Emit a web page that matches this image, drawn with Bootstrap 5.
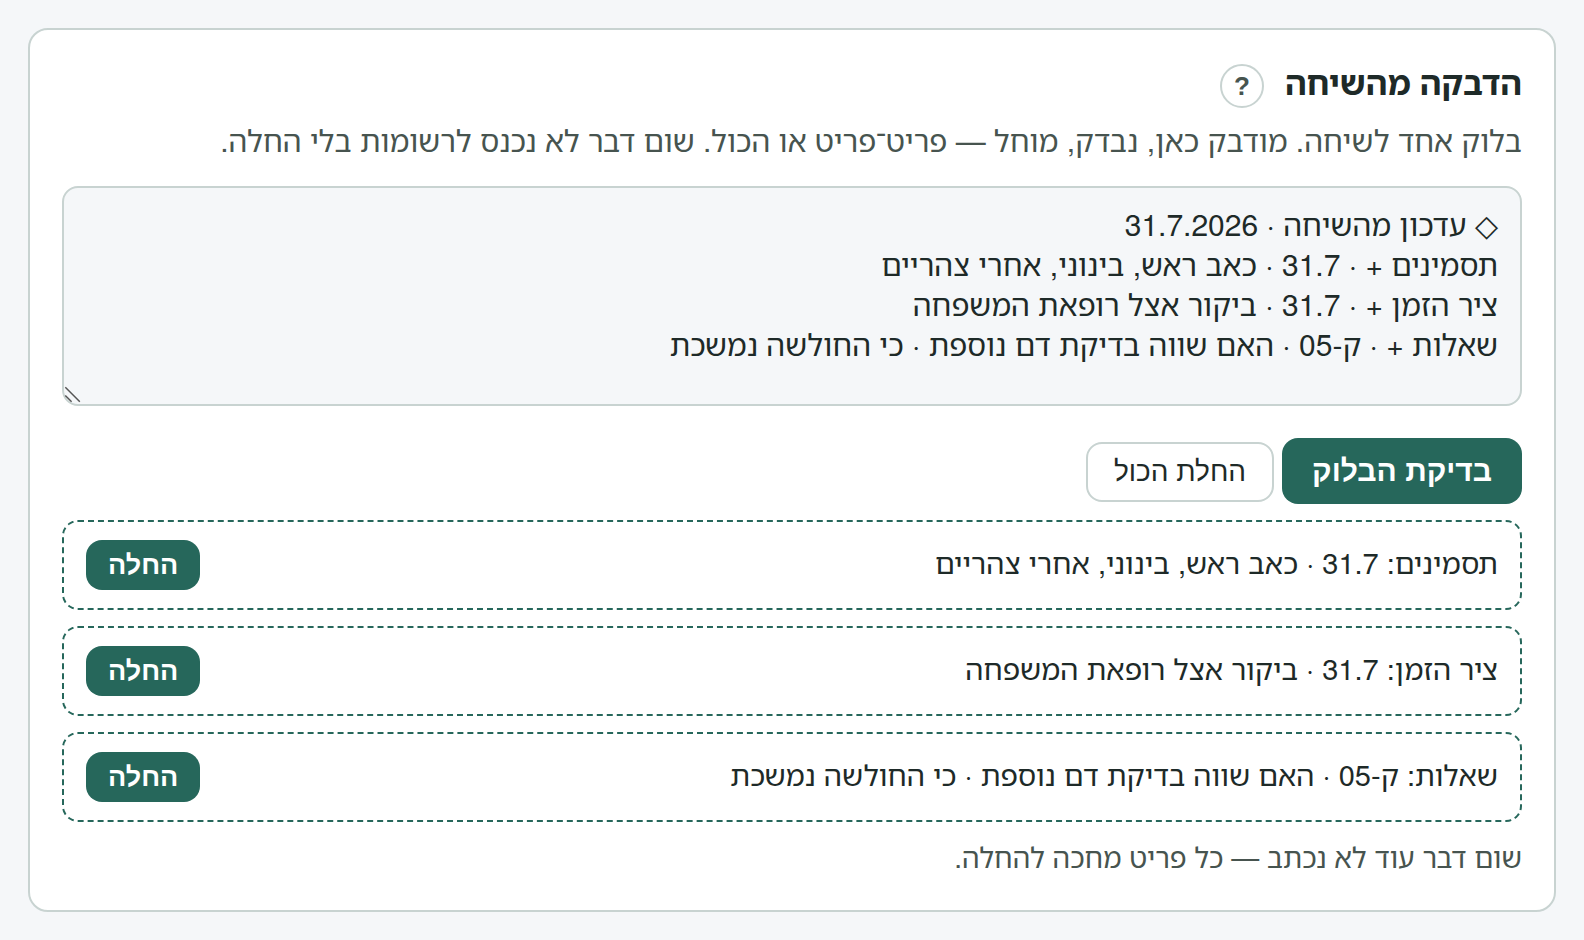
<!DOCTYPE html>
<html lang="he" dir="rtl">
<head>
<meta charset="utf-8">
<meta name="viewport" content="width=device-width, initial-scale=1">
<title>הדבקה מהשיחה</title>
<link href="https://cdn.jsdelivr.net/npm/bootstrap@5.3.0/dist/css/bootstrap.min.css" rel="stylesheet">
<style>
  :root { --ink: #1e2a28; --soft: #47544f; --line: #c8d3d1; --green: #26675b; --page: #f5f7f9; }
  body { background: var(--page); color: var(--ink); font-family: "TeX Gyre Heros", "Noto Sans Hebrew", "Liberation Sans", sans-serif; font-size: 30px; line-height: 48px; padding: 28px; }
  .panel { background: #fff; border: 2px solid var(--line); border-radius: 20px; padding: 32px; }
  .heading { gap: 21px; }
  h1 { font-size: 33px; line-height: 40px; font-weight: 700; }
  .help, .btn { font-family: "Liberation Sans", sans-serif; }
  .help { width: 44px; height: 44px; border: 2px solid var(--line); border-radius: 50%; background: #fff; color: var(--soft); font-size: 26px; line-height: 32px; font-weight: 700; padding: 0; }
  .intro { color: var(--soft); margin-bottom: 22px; }
  .block-text { background: var(--page); color: var(--ink); border: 2px solid var(--line); border-radius: 16px; font-size: 30px; line-height: 40px; padding: 16px 22px; height: 220px; resize: vertical; }
  .block-text::-webkit-resizer { background: transparent; }
  .grip { left: 2px; bottom: 2px; width: 18px; height: 18px; pointer-events: none; }
  .btn-main, .btn-apply { background: var(--green); color: #fff; font-weight: 700; border: 0; border-radius: 16px; }
  .btn-main { font-size: 30px; line-height: 34px; padding: 16px 30px; }
  .btn-all { border: 2px solid var(--line); border-radius: 16px; font-size: 28px; line-height: 32px; padding: 12px 26px; background: #fff; color: var(--ink); }
  .btn-apply { font-size: 27px; line-height: 30px; padding: 10px 22px; }
  .entry { border: 2px dashed var(--green); border-radius: 16px; padding: 18px 22px; font-size: 29px; line-height: 42px; }
  .entry span { padding-bottom: 6px; }
  .entries { margin-bottom: 14px; }
  .status { color: var(--soft); font-size: 28px; line-height: 40px; padding-bottom: 2px; }
</style>
</head>
<body>
<main class="panel">
  <div class="heading d-flex align-items-baseline mb-2"><h1 class="mb-0">הדבקה מהשיחה</h1><button type="button" class="help" aria-label="עזרה">?</button></div>
  <p class="intro">בלוק אחד לשיחה. מודבק כאן, נבדק, מוחל — פריט־פריט או הכול. שום דבר לא נכנס לרשומות בלי החלה.</p>
  <div class="position-relative">
    <textarea class="form-control block-text" aria-label="בלוק מהשיחה">◇ עדכון מהשיחה · 31.7.2026
תסמינים + · 31.7 · כאב ראש, בינוני, אחרי צהריים
ציר הזמן + · 31.7 · ביקור אצל רופאת המשפחה
שאלות + · ק-05 · האם שווה בדיקת דם נוספת · כי החולשה נמשכת</textarea>
    <svg class="grip position-absolute" viewBox="0 0 18 18" fill="none" stroke="#555" stroke-width="1.5" aria-hidden="true"><path d="M1.3 1.3 15.8 15.8M1.3 9.5 7.6 15.8"/></svg>
  </div>
  <div class="d-flex align-items-baseline gap-2 my-3 pt-3">
    <button type="button" class="btn btn-main">בדיקת הבלוק</button>
    <button type="button" class="btn btn-all">החלת הכול</button>
  </div>
  <ul class="entries list-unstyled d-flex flex-column gap-3 p-0">
    <li class="entry d-flex justify-content-between align-items-center"><span>תסמינים: 31.7 · כאב ראש, בינוני, אחרי צהריים</span><button type="button" class="btn btn-apply">החלה</button></li>
    <li class="entry d-flex justify-content-between align-items-center"><span>ציר הזמן: 31.7 · ביקור אצל רופאת המשפחה</span><button type="button" class="btn btn-apply">החלה</button></li>
    <li class="entry d-flex justify-content-between align-items-center"><span>שאלות: ק-05 · האם שווה בדיקת דם נוספת · כי החולשה נמשכת</span><button type="button" class="btn btn-apply">החלה</button></li>
  </ul>
  <p class="status mb-0">שום דבר עוד לא נכתב — כל פריט מחכה להחלה.</p>
</main>
<script src="https://cdn.jsdelivr.net/npm/bootstrap@5.3.0/dist/js/bootstrap.bundle.min.js"></script>
</body>
</html>
